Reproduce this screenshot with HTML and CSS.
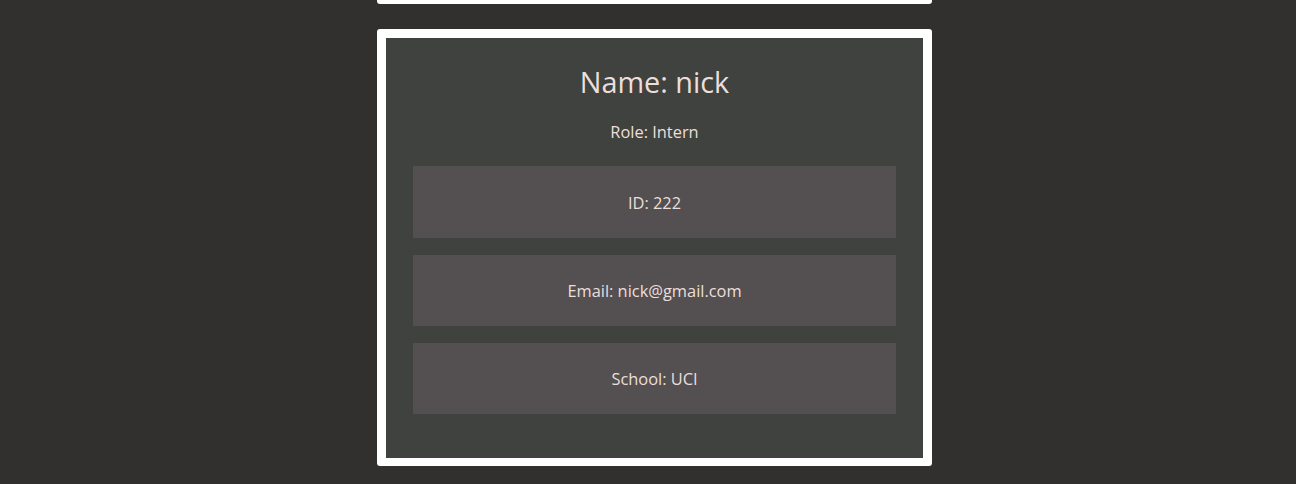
FILE: index.html
```html
<!DOCTYPE html>
<html>
<head>
<meta charset="utf-8">
<link rel="stylesheet" href="styles.css">
</head>
<body>
<main class="list">
  <section class="card prev">
    <div class="card-inner"></div>
  </section>
  <section class="card">
    <div class="card-inner">
      <h2 class="name">Name: nick</h2>
      <p class="role">Role: Intern</p>
      <div class="field">ID: 222</div>
      <div class="field">Email: nick@gmail.com</div>
      <div class="field">School: UCI</div>
    </div>
  </section>
</main>
</body>
</html>
```
FILE: styles.css
```css
html, body {
  margin: 0;
  padding: 0;
  background: #31302e;
  overflow: hidden;
}
body {
  font-family: "Open Sans", sans-serif;
  color: #ecdedb;
}
.list {
  display: flex;
  flex-direction: column;
  align-items: flex-start;
  gap: 25px;
  padding-left: 377px;
  margin-top: -433px;
}
.card {
  width: 555px;
  height: 437px;
  box-sizing: border-box;
  background: #ffffff;
  border-radius: 3px;
  padding: 9px 9px 8px 9px;
}
.card-inner {
  height: 100%;
  box-sizing: border-box;
  background: #40423f;
  padding: 25px 27px 0 27px;
  display: flex;
  flex-direction: column;
}
.name {
  margin: 0;
  font-size: 28.8px;
  font-weight: 400;
  line-height: 38px;
  text-align: center;
}
.role {
  margin: 19px 0 22px 0;
  font-size: 16.4px;
  line-height: 24px;
  text-align: center;
}
.field {
  background: #545051;
  height: 72px;
  display: flex;
  align-items: center;
  justify-content: center;
  font-size: 16.4px;
  margin-bottom: 17px;
}
.field + .field {
  height: 71px;
}
```
